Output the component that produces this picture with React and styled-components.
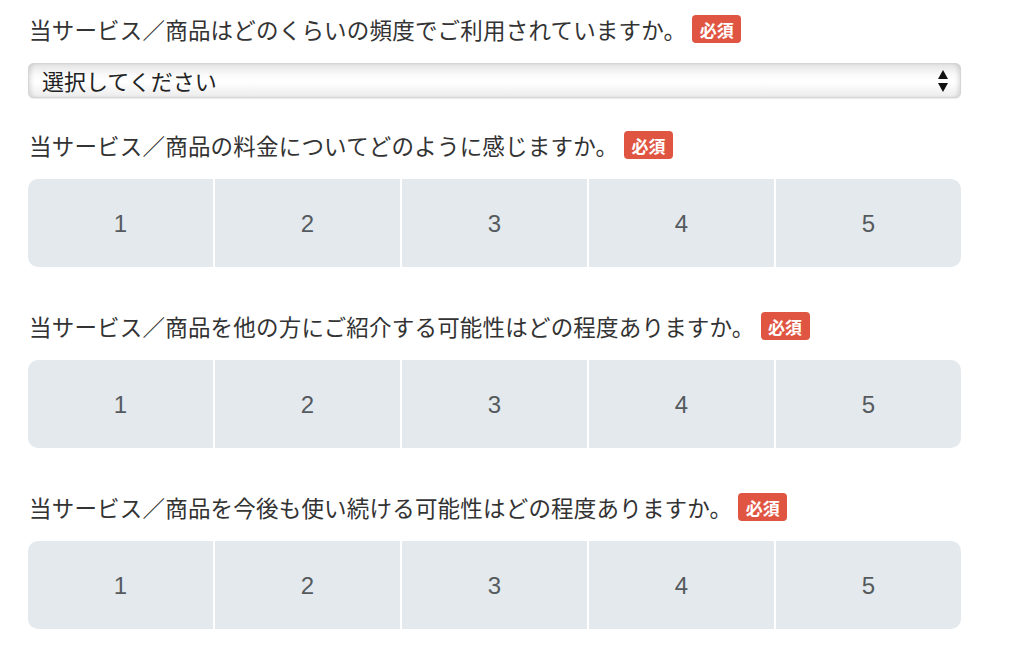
import styled, { createGlobalStyle } from 'styled-components';

const GlobalStyle = createGlobalStyle`
  body {
    margin: 0;
    background: #fff;
    font-family: "Liberation Sans", "Noto Sans CJK JP", sans-serif;
    color: #333;
  }
`;

const Form = styled.div`
  padding: 10px 63px 0 28px;
  width: 1024px;
  box-sizing: border-box;
`;

const Question = styled.div`
  margin-bottom: ${props => props.$gap}px;
`;

const Label = styled.div`
  height: 38px;
  display: flex;
  align-items: center;
  margin-bottom: 15px;
  font-family: "Noto Sans CJK JP", sans-serif;
  font-size: 22.5px;
  letter-spacing: 0.2px;
  color: #333;
  padding-left: 1px;
`;

const Required = styled.span`
  display: inline-flex;
  align-items: center;
  justify-content: center;
  margin-left: 6px;
  width: 49px;
  height: 28px;
  border-radius: 4px;
  background: #e05542;
  color: #fff;
  font-size: 17px;
  font-weight: bold;
  letter-spacing: 0;
`;

const SelectBox = styled.div`
  position: relative;
  height: 35px;
  border-radius: 5px;
  box-sizing: border-box;
  border: 1px solid #d6d6d6;
  background: linear-gradient(to bottom, #e4e4e4 0%, #fbfbfb 35%, #ffffff 55%, #ececec 100%);
  box-shadow: inset 4px 0 4px -2px rgba(0, 0, 0, 0.12), inset -4px 0 4px -2px rgba(0, 0, 0, 0.12), 0 1px 1px rgba(0, 0, 0, 0.08);
  display: flex;
  align-items: center;
  padding: 0 0 2px 13px;
  font-family: "Noto Sans CJK JP", sans-serif;
  font-size: 22px;
  color: #222;
`;

const Arrows = styled.svg`
  position: absolute;
  right: 12px;
  top: 5px;
`;

const Scale = styled.div`
  display: grid;
  grid-template-columns: repeat(5, 1fr);
  gap: 2px;
  height: 88px;
  border-radius: 10px;
  overflow: hidden;
  background: #fff;
`;

const ScaleCell = styled.div`
  background: #e3e9ed;
  display: flex;
  align-items: center;
  justify-content: center;
  padding-top: 2px;
  font-family: "Liberation Sans", "Noto Sans", sans-serif;
  font-size: 24px;
  color: #555a5e;
`;

const questions = [
  '当サービス／商品の料金についてどのように感じますか。',
  '当サービス／商品を他の方にご紹介する可能性はどの程度ありますか。',
  '当サービス／商品を今後も使い続ける可能性はどの程度ありますか。',
];

function RatingScale() {
  return (
    <Scale>
      {[1, 2, 3, 4, 5].map(n => (
        <ScaleCell key={n}>{n}</ScaleCell>
      ))}
    </Scale>
  );
}

export default function App() {
  return (
    <>
      <GlobalStyle />
      <Form>
        <Question $gap={28}>
          <Label>
            当サービス／商品はどのくらいの頻度でご利用されていますか。
            <Required>必須</Required>
          </Label>
          <SelectBox>
            選択してください
            <Arrows width="10" height="24" viewBox="0 0 10 24">
              <polygon points="5,1 10,10 0,10" fill="#111" />
              <polygon points="0,14 10,14 5,23" fill="#111" />
            </Arrows>
          </SelectBox>
        </Question>
        {questions.map(q => (
          <Question key={q} $gap={40}>
            <Label>
              {q}
              <Required>必須</Required>
            </Label>
            <RatingScale />
          </Question>
        ))}
      </Form>
    </>
  );
}
